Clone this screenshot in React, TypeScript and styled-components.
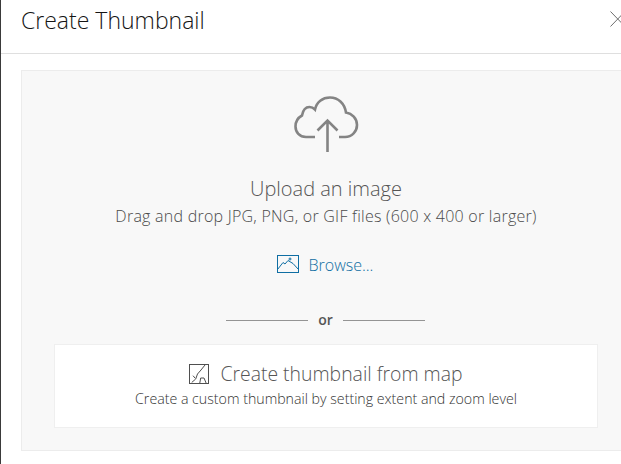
import React from "react";
import styled, { createGlobalStyle } from "styled-components";

const Global = createGlobalStyle`
  html, body { margin: 0; padding: 0; background: #fff; }
  body { width: 621px; height: 464px; overflow: hidden; font-family: "Open Sans", Lato, sans-serif; }
`;

const Viewport = styled.div`
  width: 621px;
  height: 464px;
  overflow: hidden;
  border-left: 1px solid #3a3a3a;
  box-sizing: border-box;
`;

const Modal = styled.div`
  width: 650px;
  background: #fff;
`;

const Header = styled.header`
  height: 53px;
  box-sizing: content-box;
  border-bottom: 1px solid #dfdfdf;
  display: flex;
  justify-content: space-between;
  padding: 0 25px 0 20px;
`;

const Title = styled.h1`
  margin: 6px 0 0;
  font-size: 23px;
  line-height: 28px;
  font-weight: 300;
  color: #151515;
`;

const CloseButton = styled.button`
  border: 0;
  background: none;
  padding: 0;
  margin: 10px 0 0;
  width: 16px;
  height: 18px;
  color: #6e6e6e;
  display: block;
`;

const Body = styled.main`
  padding: 16px 20px 0 20px;
`;

const DropZone = styled.section`
  height: 381px;
  box-sizing: border-box;
  background: #f8f8f8;
  border: 1px solid #ececec;
  padding: 24px 32px 0;
  display: flex;
  flex-direction: column;
  align-items: center;
`;

const UploadTitle = styled.div`
  margin-top: 24px;
  font-size: 20px;
  line-height: 24px;
  font-weight: 300;
  color: #555;
`;

const Hint = styled.div`
  margin-top: 5px;
  font-size: 16px;
  line-height: 20px;
  letter-spacing: 0.25px;
  font-weight: 300;
  color: #4a4a4a;
`;

const BrowseLink = styled.a`
  margin-top: 27px;
  margin-right: 2px;
  display: flex;
  align-items: center;
  gap: 10px;
  font-size: 16px;
  line-height: 20px;
  font-weight: 300;
  color: #0f6ea3;
`;

const BrowseLabel = styled.span`
  padding-top: 2px;
`;

const Divider = styled.div`
  margin-top: 35px;
  margin-right: 1px;
  display: flex;
  align-items: center;
  gap: 10px;
  font-size: 14px;
  line-height: 20px;
  font-weight: 600;
  color: #555;
  &::before, &::after {
    content: "";
    width: 82px;
    height: 1px;
    background: #949494;
  }
`;

const MapCard = styled.button`
  margin-top: 14px;
  width: 544px;
  height: 84px;
  box-sizing: border-box;
  background: #fff;
  border: 1px solid #efefef;
  padding: 16px 0 0;
  font-family: inherit;
  display: flex;
  flex-direction: column;
  align-items: center;
  flex: none;
`;

const CardTitle = styled.div`
  display: flex;
  align-items: center;
  gap: 11px;
  font-size: 19.4px;
  line-height: 26px;
  font-weight: 300;
  color: #555;
`;

const CardHint = styled.div`
  margin-top: 3px;
  font-size: 14.2px;
  line-height: 18px;
  font-weight: 300;
  color: #333;
`;

export default function App() {
  return (
    <>
      <Global />
      <Viewport>
        <Modal>
          <Header>
            <Title>Create Thumbnail</Title>
            <CloseButton aria-label="Close">
              <svg width="16" height="18" viewBox="0 0 16 18" fill="none" stroke="currentColor" strokeWidth="1">
                <path d="M0.5 1.5 L15 16.5 M15 1.5 L0.5 16.5" />
              </svg>
            </CloseButton>
          </Header>
          <Body>
            <DropZone>
              <svg width="66" height="58" viewBox="-1 0 66 58" fill="none" stroke="#848484" strokeWidth="2.6">
                <path d="M21 42 H12 C5.5 42 1.5 37 1.5 31.5 C1.5 26 4.5 22.5 8 20.5 C9 15 12 12 15.5 12 C17.5 12 19.5 13 21 14.5 C22.5 7 28.5 2.5 36 2.5 C44 2.5 50.5 8 52 17.5 C58 18.5 63 23.5 63 30 C63 36.5 58 42 51 42 H45" />
                <path d="M33.5 57 V26 M23.5 35.5 L33.5 25.5 L43.5 35.5" />
              </svg>
              <UploadTitle>Upload an image</UploadTitle>
              <Hint>Drag and drop JPG, PNG, or GIF files (600 x 400 or larger)</Hint>
              <BrowseLink>
                <svg width="22" height="18" viewBox="0 0 22 18" fill="none" stroke="#0f6ea3" strokeWidth="1">
                  <rect x="0.5" y="0.5" width="21" height="17" />
                  <path d="M0.5 14.5 L6 7.5 L8 9 L11 5.5 L16 8.5 L21.5 14.5" />
                  <circle cx="13" cy="4" r="1" />
                </svg>
                <BrowseLabel>Browse...</BrowseLabel>
              </BrowseLink>
              <Divider>or</Divider>
              <MapCard>
                <CardTitle>
                  <svg width="20" height="20" viewBox="0 0 20 20" fill="none" stroke="#4f4f4f" strokeWidth="1">
                    <rect x="0.5" y="0.5" width="19" height="19" />
                    <path d="M16 1 L12 6 L8.5 10 L6.7 15 L2.7 18.5 M10.7 19.5 L11.7 14 L15 14 L17.3 19.5 M4 11.7 L6 14" />
                  </svg>
                  Create thumbnail from map
                </CardTitle>
                <CardHint>Create a custom thumbnail by setting extent and zoom level</CardHint>
              </MapCard>
            </DropZone>
          </Body>
        </Modal>
      </Viewport>
    </>
  );
}
